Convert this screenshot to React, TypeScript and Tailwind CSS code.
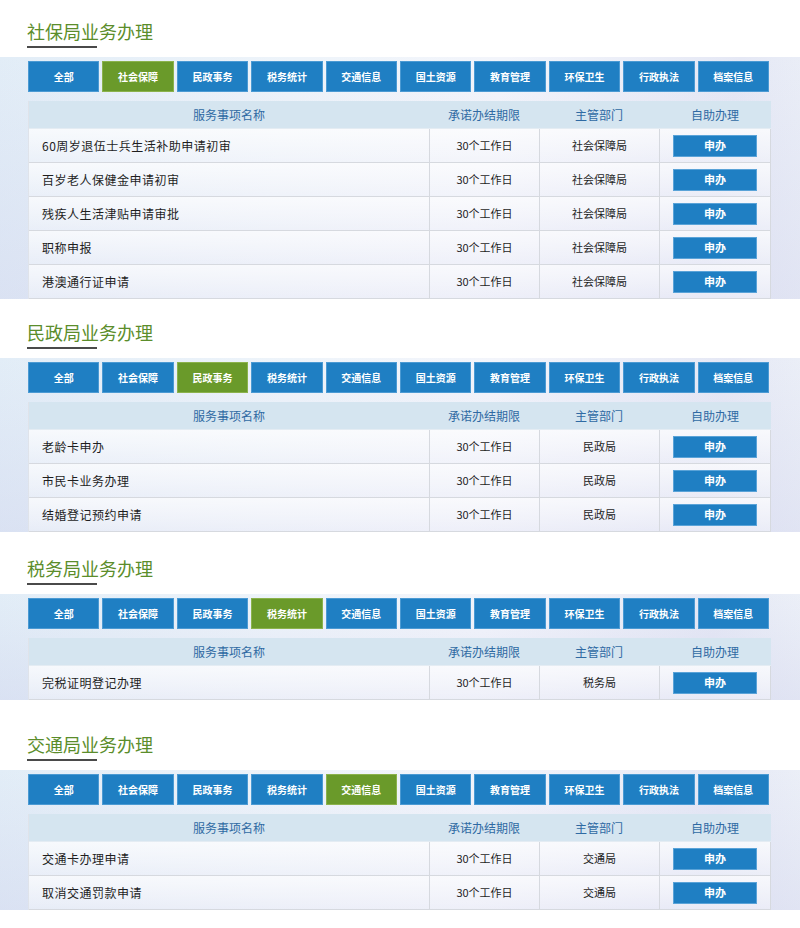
import React from "react";

const TABS = ["全部", "社会保障", "民政事务", "税务统计", "交通信息", "国土资源", "教育管理", "环保卫生", "行政执法", "档案信息"];

type Row = { name: string; dept: string };
type Section = { title: string; active: number; rows: Row[]; gap: string };

const SECTIONS: Section[] = [
  {
    title: "社保局业务办理",
    active: 1,
    gap: "mt-0",
    rows: [
      { name: "60周岁退伍士兵生活补助申请初审", dept: "社会保障局" },
      { name: "百岁老人保健金申请初审", dept: "社会保障局" },
      { name: "残疾人生活津贴申请审批", dept: "社会保障局" },
      { name: "职称申报", dept: "社会保障局" },
      { name: "港澳通行证申请", dept: "社会保障局" },
    ],
  },
  {
    title: "民政局业务办理",
    active: 2,
    gap: "mt-[2px]",
    rows: [
      { name: "老龄卡申办", dept: "民政局" },
      { name: "市民卡业务办理", dept: "民政局" },
      { name: "结婚登记预约申请", dept: "民政局" },
    ],
  },
  {
    title: "税务局业务办理",
    active: 3,
    gap: "mt-[5px]",
    rows: [{ name: "完税证明登记办理", dept: "税务局" }],
  },
  {
    title: "交通局业务办理",
    active: 4,
    gap: "mt-[13px]",
    rows: [
      { name: "交通卡办理申请", dept: "交通局" },
      { name: "取消交通罚款申请", dept: "交通局" },
    ],
  },
];

function Block({ s }: { s: Section }) {
  return (
    <section className={s.gap}>
      <div className="h-[57px] pl-[27px] pt-[20px]">
        <h2 className="text-[18px] leading-[22px] text-[#5b8d2b] font-normal">{s.title}</h2>
        <div className="mt-[4px] h-[2px] w-[70px] bg-[#4a4a4a]" />
      </div>
      <div className="bg-[linear-gradient(to_bottom,rgba(255,255,255,0)_0%,rgba(196,198,232,0.3)_100%),linear-gradient(100deg,#e2edf7_0%,#eef4fa_35%,#f3f5fb_60%,#e5e8f5_88%,#edf1f8_100%)] pl-[28px] pr-[29px] pt-[4px]">
        <div className="grid grid-cols-10 gap-x-[3px] pr-[2px]">
          {TABS.map((t, i) => (
            <div
              key={t}
              className={
                i === s.active
                  ? "h-[31px] flex items-center justify-center bg-[#6a9a2a] border border-[#8bb24c] text-white text-[10px] font-bold"
                  : "h-[31px] flex items-center justify-center bg-[#1f7fc3] border border-[#4b9ad3] text-white text-[10px] font-bold"
              }
            >
              {t}
            </div>
          ))}
        </div>
        <div className="mt-[9px] border-l border-[#dfe3ea]">
          <div className="flex h-[28px] bg-[#d5e5f0] text-[12px] text-[#2f6aa3] items-center border-b border-[#e4ecf3]">
            <div className="w-[400px] text-center">服务事项名称</div>
            <div className="w-[110px] text-center">承诺办结期限</div>
            <div className="w-[120px] text-center">主管部门</div>
            <div className="flex-1 text-center">自助办理</div>
          </div>
          {s.rows.map((r) => (
            <div
              key={r.name}
              className="flex h-[34px] border-b border-[#d6d9df] bg-[linear-gradient(to_bottom,rgba(255,255,255,0.75),rgba(255,255,255,0.35))]"
            >
              <div className="w-[400px] flex items-center pl-[13px] text-[12px] text-[#1e1e1e] tracking-[0.5px]">{r.name}</div>
              <div className="w-[110px] flex items-center justify-center border-l border-[#d6d9df] text-[11px] text-[#1e1e1e]">30个工作日</div>
              <div className="w-[120px] flex items-center justify-center border-l border-[#d6d9df] text-[11px] text-[#1e1e1e]">{r.dept}</div>
              <div className="flex-1 flex items-center justify-center border-l border-r border-[#d6d9df]">
                <div className="w-[84px] h-[22px] flex items-center justify-center bg-[#1f7fc3] border border-[#5aa3d8] text-white text-[11px] font-bold">申办</div>
              </div>
            </div>
          ))}
        </div>
      </div>
    </section>
  );
}

export default function App() {
  return (
    <div className="w-[800px] h-[928px] bg-white overflow-hidden font-['Noto_Sans_CJK_SC','Noto_Sans',sans-serif]">
      {SECTIONS.map((s) => (
        <Block key={s.title} s={s} />
      ))}
    </div>
  );
}
